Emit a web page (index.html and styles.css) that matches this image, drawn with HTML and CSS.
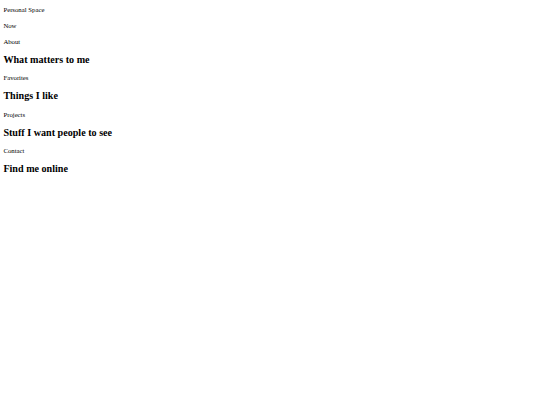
FILE: index.html
```html
<!DOCTYPE html>
<html>
<head>
<meta charset="utf-8">
<link rel="stylesheet" href="styles.css">
</head>
<body>
<p class="line first">Personal Space</p>
<p class="line">Now</p>
<p class="line">About</p>
<h2 class="title">What matters to me</h2>
<p class="line">Favorites</p>
<h2 class="title">Things I like</h2>
<p class="line">Projects</p>
<h2 class="title">Stuff I want people to see</h2>
<p class="line">Contact</p>
<h2 class="title">Find me online</h2>
</body>
</html>
```
FILE: styles.css
```css
html, body {
  background: #ffffff;
}
body {
  margin: 0;
  padding: 6px 3.375px;
  font-family: "Liberation Serif", "Times New Roman", serif;
  font-size: 6.75px;
  color: #000000;
}
.line {
  margin: 8.1px 0;
  line-height: 8px;
}
.first {
  margin-top: 0;
}
.title {
  font-size: 10.125px;
  line-height: 12px;
  font-weight: bold;
  margin: 8.1px 0;
}
```
